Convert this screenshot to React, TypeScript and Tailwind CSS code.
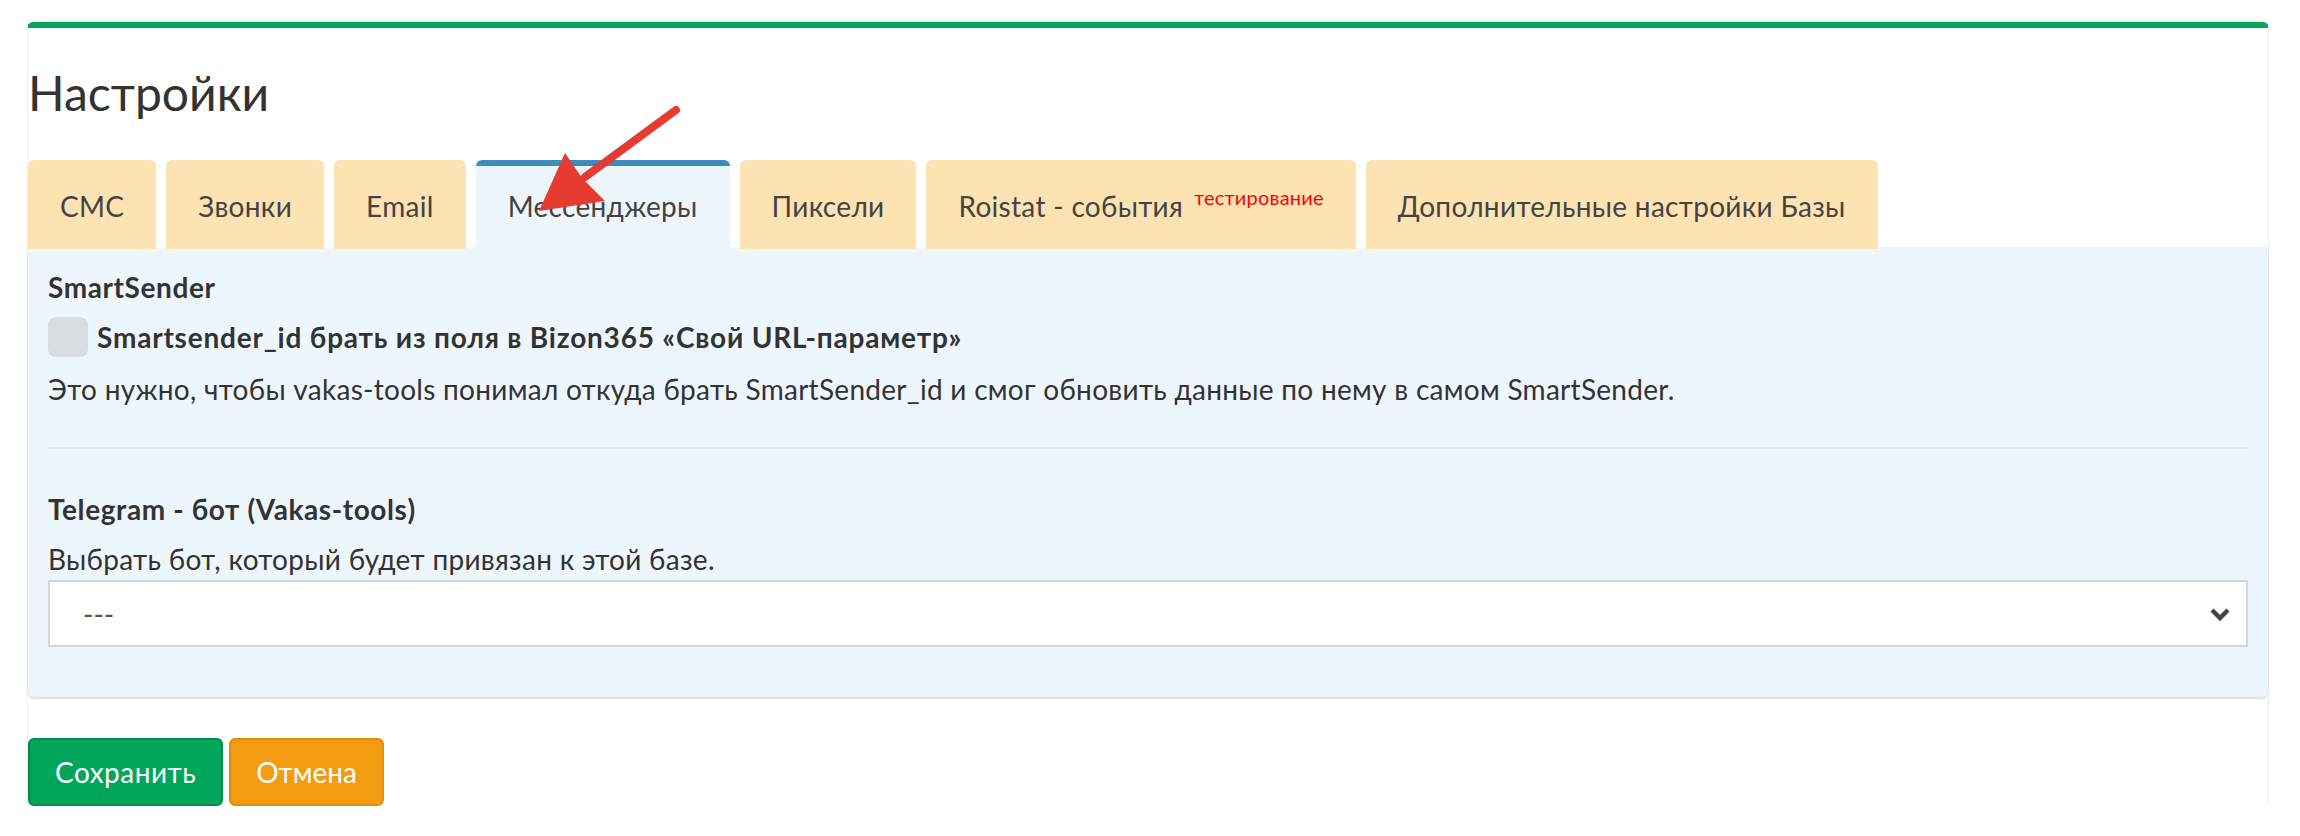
import React from "react";

const tabs = [
	{ label: "СМС" },
	{ label: "Звонки" },
	{ label: "Email" },
	{ label: "Мессенджеры", active: true },
	{ label: "Пиксели" },
	{ label: "Roistat - события", sup: "тестирование" },
	{ label: "Дополнительные настройки Базы" },
];

function Chevron() {
	return (
		<svg width="20" height="14" viewBox="0 0 20 14" className="absolute right-[16px] top-1/2 -translate-y-1/2">
			<path d="M2 3 L10 11 L18 3" fill="none" stroke="#444" strokeWidth="4.5" />
		</svg>
	);
}

function Arrow() {
	return (
		<svg
			className="pointer-events-none absolute left-0 top-0 z-20"
			width="2300"
			height="300"
			viewBox="0 0 2300 300"
		>
			<line x1="676" y1="88" x2="585" y2="155" stroke="#e53b30" strokeWidth="8" strokeLinecap="round" />
			<polygon points="539,189 565,131 582,156 605,179" fill="#e53b30" />
		</svg>
	);
}

export default function App() {
	return (
		<div className="relative min-h-[836px] bg-white font-['Lato','Noto_Sans',sans-serif] text-[#333]">
			<div className="ml-[27px] mt-[22px] w-[2242px] rounded-t-[6px] border-x border-t-[6px] border-x-[#f0f0f0] border-t-[#00a65a] bg-white">
				<h1 className="pt-[38px] text-[48px] font-normal leading-[53px]">Настройки</h1>

				<div className="mt-[41px]">
					<ul className="relative z-10 -mb-[2px] flex gap-[10px]">
						{tabs.map((t) => (
							<li
								key={t.label}
								className={
									t.active
										? "flex h-[89px] items-center rounded-t-[6px] border-t-[6px] border-t-[#3c8dbc] bg-[#eef6fd] px-[32px] text-[28px] tracking-[0.3px] text-[#444]"
										: "flex h-[89px] items-center rounded-t-[6px] border-t-[6px] border-t-[#fde3b2] bg-[#fde3b2] px-[32px] text-[28px] tracking-[0.3px] text-[#444]"
								}
							>
								<span className="-mt-[4px]">{t.label}</span>
								{t.sup && (
									<sup className="ml-[11px] -mt-[2px] self-center text-[20px] leading-none tracking-[0.2px] text-[#ff0000]">
										{t.sup}
									</sup>
								)}
							</li>
						))}
					</ul>

					<div className="rounded-b-[6px] bg-[#eef6fd] px-[20px] pb-[50px] pt-[20px] shadow-[0_2px_2px_rgba(0,0,0,0.12)]">
						<div className="text-[28px] font-bold leading-[40px] tracking-[0.6px]">SmartSender</div>
						<div className="mt-[10px] flex items-center gap-[9px]">
							<span className="h-[40px] w-[40px] rounded-[8px] bg-[#d7dde1]" />
							<span className="text-[28px] font-bold leading-[40px] tracking-[0.8px]">
								Smartsender_id брать из поля в Bizon365 «Свой URL-параметр»
							</span>
						</div>
						<p className="mt-[12px] text-[28px] leading-[40px] tracking-[0.28px]">
							Это нужно, чтобы vakas-tools понимал откуда брать SmartSender_id и смог обновить данные по нему в
							самом SmartSender.
						</p>

						<hr className="mt-[38px] border-t-2 border-[#e6eaee]" />

						<div className="mt-[40px] text-[28px] font-bold leading-[40px] tracking-[0.6px]">
							Telegram - бот (Vakas-tools)
						</div>
						<div className="mt-[10px] text-[28px] leading-[40px] tracking-[0.3px]">
							Выбрать бот, который будет привязан к этой базе.
						</div>
						<div className="relative mt-[1px] flex h-[67px] items-center border-2 border-[#d2d7df] bg-white pl-[33px] text-[28px] text-[#555]">
							---
							<Chevron />
						</div>
					</div>
				</div>

				<div className="mt-[41px] flex gap-[6px]">
					<button className="h-[68px] rounded-[6px] border-2 border-[#008d4c] bg-[#00a65a] px-[25px] text-[28px] tracking-[0.5px] text-white">
						Сохранить
					</button>
					<button className="h-[68px] rounded-[6px] border-2 border-[#e08e0b] bg-[#f39c12] px-[25px] text-[28px] text-white">
						Отмена
					</button>
				</div>
			</div>
			<Arrow />
		</div>
	);
}
